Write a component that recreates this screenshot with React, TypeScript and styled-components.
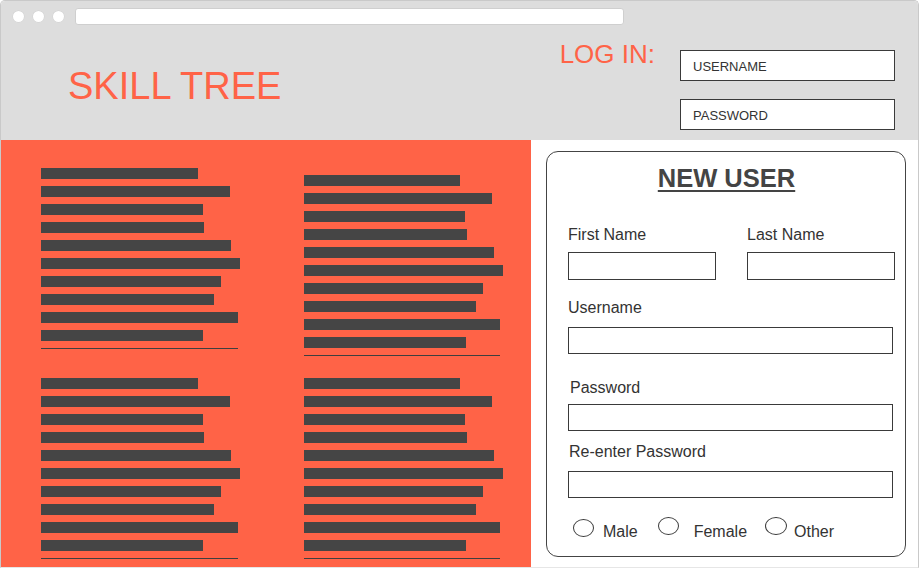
import React from "react";
import styled, { createGlobalStyle } from "styled-components";

const GlobalStyle = createGlobalStyle`
  html, body { margin: 0; padding: 0; background: #ffffff; }
  body { font-family: "Liberation Sans", Arial, Helvetica, sans-serif; }
  * { box-sizing: border-box; }
`;

const TOMATO = "#ff6347";
const INK = "#333333";

const Window = styled.div`
  width: 919px;
  height: 568px;
  border: 1px solid #c9c9c9;
  border-bottom-color: #e6e6e6;
  border-radius: 5px 5px 0 0;
  overflow: hidden;
  display: flex;
  flex-direction: column;
`;

const TopArea = styled.header`
  height: 139px;
  flex: none;
  background: #dddddd;
  display: flex;
  flex-direction: column;
`;

const ChromeBar = styled.div`
  display: flex;
  align-items: center;
  height: 17px;
  margin-top: 7px;
  padding-left: 12px;
  gap: 9px;
`;

const Dot = styled.span`
  width: 11px;
  height: 11px;
  border-radius: 50%;
  background: #ffffff;
  box-shadow: 0 0 0 0.5px #d0d0d0;
`;

const UrlBar = styled.div`
  width: 549px;
  height: 17px;
  margin-left: 2px;
  background: #ffffff;
  border: 1px solid #cfcfcf;
  border-radius: 3px;
`;

const HeaderRow = styled.div`
  flex: 1;
  display: flex;
  align-items: flex-start;
`;

const Brand = styled.h1`
  margin: 39px 0 0 67px;
  font-size: 38px;
  line-height: 44px;
  font-weight: 400;
  color: ${TOMATO};
  white-space: nowrap;
`;

const LoginGroup = styled.div`
  margin-left: auto;
  padding-right: 23px;
  display: flex;
  align-items: flex-start;
  gap: 25px;
`;

const LoginLabel = styled.div`
  margin-top: 14px;
  font-size: 26px;
  line-height: 30px;
  color: ${TOMATO};
  white-space: nowrap;
`;

const LoginFields = styled.div`
  margin-top: 25px;
  display: flex;
  flex-direction: column;
  gap: 18px;
`;

const LoginInput = styled.div`
  width: 215px;
  height: 31px;
  background: #ffffff;
  border: 1px solid #3a3a3a;
  padding: 2px 0 0 12px;
  display: flex;
  align-items: center;
  font-size: 13px;
  color: ${INK};
`;

const Body = styled.main`
  flex: 1;
  display: flex;
  min-height: 0;
`;

const LeftPanel = styled.section`
  width: 530px;
  flex: none;
  background: ${TOMATO};
  padding: 28px 0 0 40px;
  display: grid;
  grid-template-columns: 263px auto;
  grid-auto-rows: max-content;
  row-gap: 22px;
`;

const Block = styled.div<{ $offset?: number }>`
  display: flex;
  flex-direction: column;
  align-items: flex-start;
  gap: 7px;
  margin-top: ${(p) => p.$offset ?? 0}px;
`;

const Bar = styled.div<{ $w: number }>`
  width: ${(p) => p.$w}px;
  height: 11px;
  background: #454545;
`;

const Rule = styled.div<{ $w: number }>`
  width: ${(p) => p.$w}px;
  height: 1px;
  background: #3f3f3f;
`;

const RightPanel = styled.section`
  flex: 1;
  background: #ffffff;
  padding: 11px 14px 10px 15px;
  display: flex;
`;

const Card = styled.form`
  flex: 1;
  border: 1px solid #444444;
  border-radius: 12px;
  padding: 0 10px 0 21px;
  display: flex;
  flex-direction: column;
  color: ${INK};
`;

const CardTitle = styled.h2`
  margin: 11px 0 0 0;
  padding-right: 10px;
  text-align: center;
  font-size: 25.5px;
  line-height: 30px;
  font-weight: 700;
  color: #444444;
  text-decoration: underline;
  text-decoration-thickness: 2px;
  text-underline-offset: 3px;
`;

const NameRow = styled.div`
  margin-top: 32px;
  display: grid;
  grid-template-columns: 148px 148px;
  column-gap: 31px;
`;

const Field = styled.div<{ $top?: number }>`
  display: flex;
  flex-direction: column;
  margin-top: ${(p) => p.$top ?? 0}px;
`;

const Label = styled.label<{ $indent?: number; $gap: number }>`
  font-size: 16px;
  line-height: 19px;
  color: ${INK};
  padding-left: ${(p) => p.$indent ?? 0}px;
  margin-bottom: ${(p) => p.$gap}px;
  white-space: nowrap;
`;

const TextBox = styled.div<{ $h: number; $w?: number }>`
  width: ${(p) => (p.$w ? `${p.$w}px` : "100%")};
  height: ${(p) => p.$h}px;
  border: 1px solid #3a3a3a;
  background: #ffffff;
`;

const RadioRow = styled.div`
  margin-top: 19px;
  display: flex;
  align-items: flex-end;
`;

const RadioOption = styled.div<{ $left: number; $gap: number }>`
  display: flex;
  align-items: flex-end;
  margin-left: ${(p) => p.$left}px;
  gap: ${(p) => p.$gap}px;
`;

const RadioMark = styled.span<{ $lift: number; $w: number }>`
  width: ${(p) => p.$w}px;
  height: 18px;
  border: 1px solid #3a3a3a;
  border-radius: 50%;
  margin-bottom: ${(p) => p.$lift}px;
  background: #ffffff;
`;

const RadioText = styled.span`
  font-size: 16px;
  line-height: 19px;
  color: ${INK};
`;

const col1 = [157, 189, 162, 163, 190, 199, 180, 173, 197, 162];
const col2 = [156, 188, 161, 163, 190, 199, 179, 172, 196, 162];

const TextBlock: React.FC<{ widths: number[]; rule: number; offset?: number }> = ({
  widths,
  rule,
  offset,
}) => (
  <Block $offset={offset}>
    {widths.map((w, i) => (
      <Bar key={i} $w={w} />
    ))}
    <Rule $w={rule} />
  </Block>
);

export default function App() {
  return (
    <>
      <GlobalStyle />
      <Window>
        <TopArea>
          <ChromeBar>
            <Dot />
            <Dot />
            <Dot />
            <UrlBar />
          </ChromeBar>
          <HeaderRow>
            <Brand>SKILL TREE</Brand>
            <LoginGroup>
              <LoginLabel>LOG IN:</LoginLabel>
              <LoginFields>
                <LoginInput>USERNAME</LoginInput>
                <LoginInput>PASSWORD</LoginInput>
              </LoginFields>
            </LoginGroup>
          </HeaderRow>
        </TopArea>
        <Body>
          <LeftPanel>
            <TextBlock widths={col1} rule={197} />
            <TextBlock widths={col2} rule={196} offset={7} />
            <TextBlock widths={col1} rule={197} />
            <TextBlock widths={col2} rule={196} />
          </LeftPanel>
          <RightPanel>
            <Card onSubmit={(e) => e.preventDefault()}>
              <CardTitle>NEW USER</CardTitle>
              <NameRow>
                <Field>
                  <Label $gap={8}>First Name</Label>
                  <TextBox $h={28} />
                </Field>
                <Field>
                  <Label $gap={8}>Last Name</Label>
                  <TextBox $h={28} />
                </Field>
              </NameRow>
              <Field $top={18}>
                <Label $gap={10}>Username</Label>
                <TextBox $h={27} $w={325} />
              </Field>
              <Field $top={24}>
                <Label $gap={7} $indent={2}>
                  Password
                </Label>
                <TextBox $h={27} $w={325} />
              </Field>
              <Field $top={11}>
                <Label $gap={10} $indent={1}>
                  Re-enter Password
                </Label>
                <TextBox $h={27} $w={325} />
              </Field>
              <RadioRow>
                <RadioOption $left={5} $gap={9}>
                  <RadioMark $lift={4} $w={21} />
                  <RadioText>Male</RadioText>
                </RadioOption>
                <RadioOption $left={20} $gap={15}>
                  <RadioMark $lift={6} $w={21} />
                  <RadioText>Female</RadioText>
                </RadioOption>
                <RadioOption $left={18} $gap={7}>
                  <RadioMark $lift={6} $w={22} />
                  <RadioText>Other</RadioText>
                </RadioOption>
              </RadioRow>
            </Card>
          </RightPanel>
        </Body>
      </Window>
    </>
  );
}
